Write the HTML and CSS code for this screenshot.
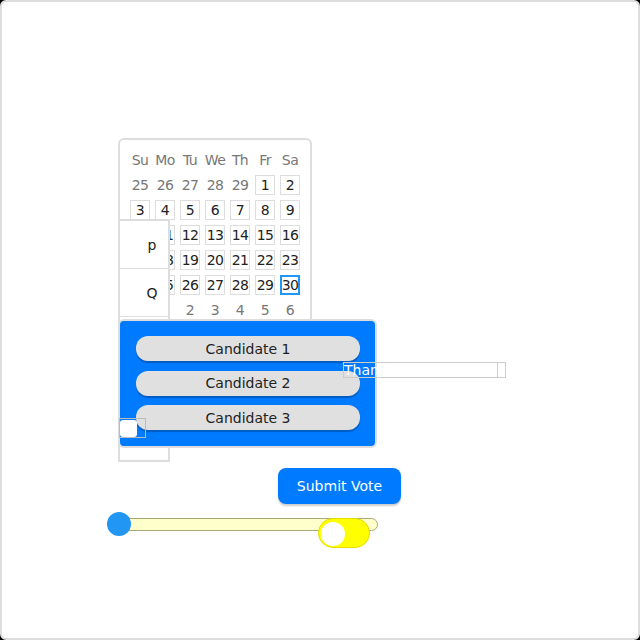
FILE: index.html
```html
<!DOCTYPE html>
<html>
<head>
<meta charset="utf-8">
<link rel="stylesheet" href="styles.css">
</head>
<body>
<div class="frame">
  <div class="calendar">
    <div class="hd">Su</div><div class="hd">Mo</div><div class="hd">Tu</div><div class="hd">We</div><div class="hd">Th</div><div class="hd">Fr</div><div class="hd">Sa</div>
    <div class="od">25</div><div class="od">26</div><div class="od">27</div><div class="od">28</div><div class="od">29</div><div class="d">1</div><div class="d">2</div>
    <div class="d">3</div><div class="d">4</div><div class="d">5</div><div class="d">6</div><div class="d">7</div><div class="d">8</div><div class="d">9</div>
    <div class="d">10</div><div class="d">11</div><div class="d">12</div><div class="d">13</div><div class="d">14</div><div class="d">15</div><div class="d">16</div>
    <div class="d">17</div><div class="d">18</div><div class="d">19</div><div class="d">20</div><div class="d">21</div><div class="d">22</div><div class="d">23</div>
    <div class="d">24</div><div class="d">25</div><div class="d">26</div><div class="d">27</div><div class="d">28</div><div class="d">29</div><div class="d sel">30</div>
    <div class="od">31</div><div class="od">1</div><div class="od">2</div><div class="od">3</div><div class="od">4</div><div class="od">5</div><div class="od">6</div>
  </div>

  <ul class="list">
    <li>p</li>
    <li>Q</li>
    <li></li>
    <li></li>
    <li></li>
  </ul>

  <div class="panel">
    <button class="cand">Candidate 1</button>
    <button class="cand">Candidate 2</button>
    <button class="cand">Candidate 3</button>
  </div>

  <label class="check"><span class="box"></span></label>

  <div class="thanks"><span class="thanks-inner">Thank you for voting!</span></div>

  <button class="submit">Submit Vote</button>

  <div class="slider"><span class="thumb"></span></div>

  <div class="toggle"><span class="knob"></span></div>
</div>
</body>
</html>
```

FILE: styles.css
```css
* { box-sizing: border-box; }
html, body { margin: 0; padding: 0; background: #000; }
body { font-family: "DejaVu Sans", "Noto Sans", sans-serif; font-size: 14px; color: #222; }

.frame {
  position: relative;
  width: 640px;
  height: 640px;
  background: #fff;
  border: 2px solid #ddd;
  border-radius: 6px;
  overflow: hidden;
}

.calendar {
  position: absolute;
  left: 116px;
  top: 136px;
  width: 194px;
  padding: 10px;
  border: 2px solid #ddd;
  border-radius: 6px;
  background: #fff;
  display: grid;
  grid-template-columns: repeat(7, 20px);
  grid-auto-rows: 20px;
  gap: 5px;
}
.calendar div {
  display: flex;
  align-items: center;
  justify-content: center;
  font-size: 14px;
  letter-spacing: -0.6px;
  white-space: nowrap;
}
.calendar .hd { color: #777; }
.calendar .od { color: #777; }
.calendar .d { border: 1px solid #ddd; color: #222; }
.calendar .sel { border: 2px solid #2196f3; }

.list {
  position: absolute;
  left: 116px;
  top: 217px;
  width: 52px;
  height: 243px;
  margin: 0;
  padding: 0;
  list-style: none;
  background: #fff;
  border: 2px solid #ddd;
}
.list li {
  height: 48px;
  border-bottom: 1px solid #ddd;
  display: flex;
  align-items: center;
  justify-content: center;
  padding-left: 16px;
  font-size: 14px;
}

.panel {
  position: absolute;
  left: 116px;
  top: 317px;
  width: 259px;
  height: 129px;
  background: #007bff;
  border: 2px solid #ddd;
  border-radius: 6px;
  padding: 15px 15px 0 16px;
  display: flex;
  flex-direction: column;
  gap: 9.5px;
}
.cand {
  height: 25px;
  border: none;
  border-radius: 12px;
  background: #e0e0e0;
  box-shadow: 0 2px 1px rgba(0, 0, 0, 0.25);
  font-family: inherit;
  font-size: 14px;
  color: #222;
  padding: 0;
}

.check {
  position: absolute;
  left: 117px;
  top: 416px;
  width: 27px;
  height: 20px;
  border: 1px solid #bbb;
}
.check .box {
  position: absolute;
  left: 0;
  top: 1px;
  width: 17px;
  height: 17px;
  background: #fff;
  border-radius: 3px;
}

.thanks {
  position: absolute;
  left: 341px;
  top: 360px;
  width: 163px;
  height: 16px;
  border: 1px solid #ccc;
  color: #fff;
  font-size: 14px;
  line-height: 14px;
  white-space: nowrap;
}
.thanks-inner {
  display: block;
  width: 154px;
  height: 14px;
  border-right: 1px solid #ccc;
  overflow: hidden;
}

.submit {
  position: absolute;
  left: 276px;
  top: 466px;
  width: 123px;
  height: 36px;
  border: none;
  border-radius: 8px;
  background: #007bff;
  color: #fff;
  font-family: inherit;
  font-size: 14px;
  box-shadow: 0 2px 2px rgba(0, 0, 0, 0.2);
  padding: 0;
}

.slider {
  position: absolute;
  left: 116px;
  top: 516px;
  width: 260px;
  height: 13px;
  background: #ffffcc;
  border: 1px solid #a9a978;
  border-radius: 7px;
}
.slider .thumb {
  position: absolute;
  left: -12px;
  top: -7px;
  width: 24px;
  height: 24px;
  border-radius: 50%;
  background: #2196f3;
}

.toggle {
  position: absolute;
  left: 316px;
  top: 516px;
  width: 52px;
  height: 30px;
  border-radius: 15px;
  background: #ffff00;
  border: 1px solid #e6dc00;
}
.toggle .knob {
  position: absolute;
  left: 2px;
  top: 3px;
  width: 24px;
  height: 24px;
  border-radius: 50%;
  background: #fff;
}
```
